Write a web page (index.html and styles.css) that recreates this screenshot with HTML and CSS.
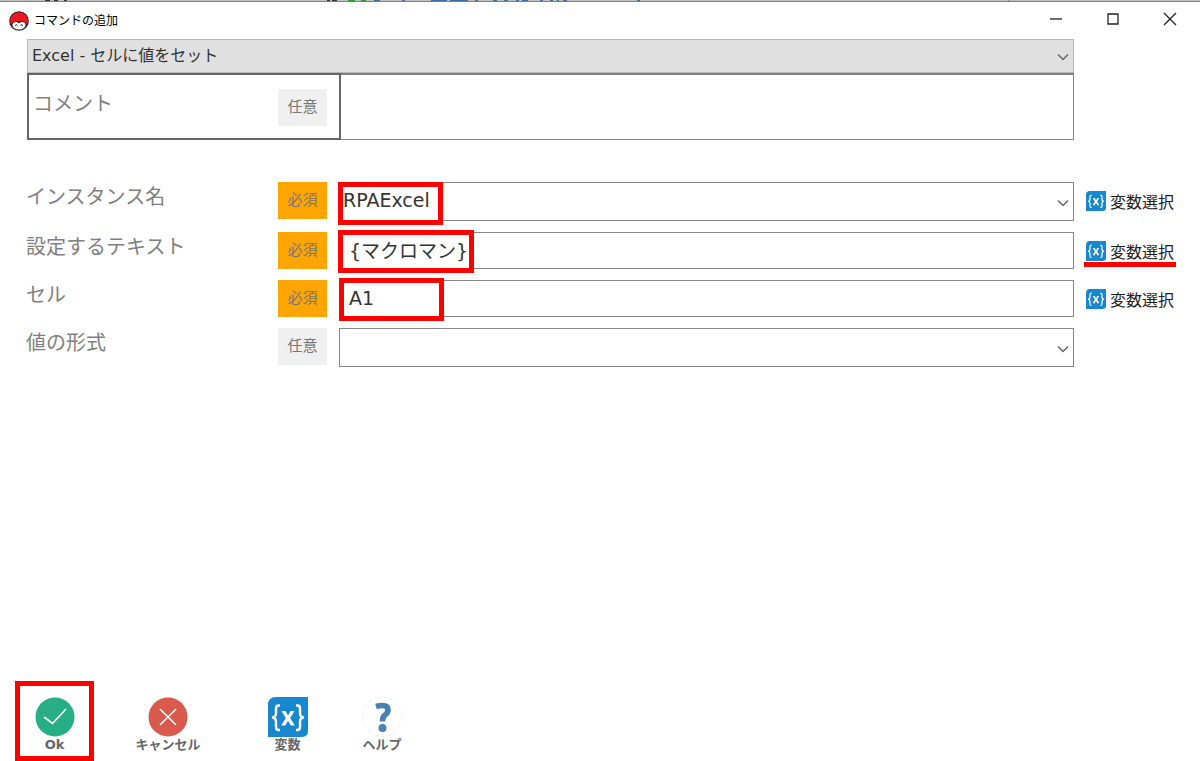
FILE: index.html
```html
<!DOCTYPE html>
<html lang="ja">
<head>
<meta charset="utf-8">
<title>コマンドの追加</title>
<link rel="stylesheet" href="styles.css">
</head>
<body>
<svg class="defs" aria-hidden="true">
  <symbol id="variable" viewBox="0 0 40 40">
    <path d="M8 0H40V34Q40 40 33 40H0V8Q0 0 8 0Z" fill="#1787cf"/>
    <g fill="none" stroke="#fff" stroke-width="2.4">
      <path d="M12 8.500H10.500Q8 8.500 8 11.500V16Q8 20.500 4 20.500Q8 20.500 8 25V30Q8 33 10.500 33H12"/>
      <path d="M28 8.500H29.500Q32 8.500 32 11.500V16Q32 20.500 36 20.500Q32 20.500 32 25V30Q32 33 29.500 33H28"/>
    </g>
    <path d="M13.500 14H17.500L20 18.500L22.500 14H26.500L22.200 21L26.800 28.500H22.700L20 23.700L17.300 28.500H13.200L17.800 21Z" fill="#fff"/>
  </symbol>
  <symbol id="chevron" viewBox="0 0 12 8">
    <path d="M1 1.500L6 6.500L11 1.500" fill="none" stroke="currentColor" stroke-width="1.500"/>
  </symbol>
</svg>
<div class="window">
  <div class="backdrop">
    <svg width="1200" height="2" aria-hidden="true">
      <path d="M45 1h5M54 1h4M64 1h3M327 1h3M332 1h5" stroke="#333" stroke-width="2"/>
      <path d="M348 1h7M361 1h5" stroke="#2a9d2a" stroke-width="2"/>
      <path d="M374 1h6M402 1h3M431 1h16M450 1h18M475 1h3M493 1h4M504 1h4M516 1h3M522 1h6M540 1h3M550 1h3M557 1h2M563 1h4M637 1h3" stroke="#3d6ba5" stroke-width="2"/>
      <path d="M1009 0v2" stroke="#777"/>
    </svg>
  </div>
  <header class="titlebar">
    <svg class="app-icon" viewBox="0 0 20 20" aria-hidden="true">
      <circle cx="10" cy="10" r="9.800" fill="#2a2020"/>
      <path d="M1.200 12Q.5 6 5 2.800Q10 -.2 15 2.800Q19.500 6 18.800 12L17 13Q15.500 9.500 10 10.500Q4.500 9.500 3 13Z" fill="#ea1a20"/>
      <path d="M3.300 14Q4 11 7 11Q9 11 10 12.500Q11 11 13 11Q16 11 16.700 14Q16 18.300 10 18.500Q4 18.300 3.300 14Z" fill="#fff"/>
      <path d="M6.300 14.800Q7.300 11.800 8.300 14.800M11.700 14.800Q12.700 11.800 13.700 14.800" fill="none" stroke="#222" stroke-width=".9"/>
    </svg>
    <h1 class="title">コマンドの追加</h1>
    <button class="control" aria-label="最小化"><svg viewBox="0 0 12 12"><path d="M0 6H12" /></svg></button>
    <button class="control" aria-label="最大化"><svg viewBox="0 0 12 12"><path d="M1 1H11V11H1Z"/></svg></button>
    <button class="control" aria-label="閉じる"><svg viewBox="0 0 12 12"><path d="M0 0L12 12M12 0L0 12"/></svg></button>
  </header>

  <main class="content">
    <section class="command">
      <div class="field">
        <select class="command-select" aria-label="コマンド"><option>Excel - セルに値をセット</option></select>
        <svg class="chevron"><use href="#chevron"/></svg>
      </div>
      <div class="comment">
        <div class="comment-head">
          <label class="label" for="comment">コメント</label>
          <span class="badge">任意</span>
        </div>
        <input class="comment-input" id="comment" type="text">
      </div>
    </section>

    <form class="form" id="settings">
      <div class="row">
        <label class="label" for="instance">インスタンス名</label>
        <span class="badge required">必須</span>
        <div class="field">
          <select class="input tall flush" id="instance"><option>RPAExcel</option></select>
          <svg class="chevron"><use href="#chevron"/></svg>
          <span class="mark mark-instance"></span>
        </div>
        <button class="pick" type="button"><svg class="pick-icon"><use href="#variable"/></svg>変数選択</button>
      </div>
      <div class="row">
        <label class="label" for="text">設定するテキスト</label>
        <span class="badge required">必須</span>
        <div class="field">
          <input class="input" id="text" type="text" value="{マクロマン}">
          <span class="mark mark-text"></span>
        </div>
        <button class="pick marked" type="button"><svg class="pick-icon"><use href="#variable"/></svg>変数選択</button>
      </div>
      <div class="row">
        <label class="label" for="cell">セル</label>
        <span class="badge required">必須</span>
        <div class="field">
          <input class="input" id="cell" type="text" value="A1">
          <span class="mark mark-cell"></span>
        </div>
        <button class="pick" type="button"><svg class="pick-icon"><use href="#variable"/></svg>変数選択</button>
      </div>
      <div class="row">
        <label class="label" for="format">値の形式</label>
        <span class="badge">任意</span>
        <div class="field">
          <select class="input tall" id="format"><option></option></select>
          <svg class="chevron"><use href="#chevron"/></svg>
        </div>
      </div>
    </form>
  </main>

  <footer class="actions">
    <button class="action selected">
      <svg class="action-icon" viewBox="0 0 40 40"><circle cx="20" cy="20" r="19.500" fill="#27ae85"/><path d="M9 20L17.500 26.500L31 12" fill="none" stroke="#fff" stroke-width="1.600"/></svg>
      Ok
    </button>
    <button class="action">
      <svg class="action-icon" viewBox="0 0 40 40"><circle cx="20" cy="20" r="19.500" fill="#d9594c"/><path d="M12 12L28 28M28 12L12 28" stroke="#fff" stroke-width="1.600"/></svg>
      キャンセル
    </button>
    <button class="action">
      <svg class="action-icon"><use href="#variable"/></svg>
      変数
    </button>
    <button class="action">
      <svg class="action-icon" viewBox="0 0 40 40"><circle cx="20" cy="20" r="19.500" fill="#fff" stroke="#eee" stroke-dasharray="4 3"/><path d="M14 9.500Q17.500 8.500 20.500 8.500Q26 8.500 26 13Q26 16 23 18Q20.500 20 20.500 24.500" fill="none" stroke="#4682b4" stroke-width="5.600"/><circle cx="20.500" cy="31" r="4" fill="#4682b4"/></svg>
      ヘルプ
    </button>
  </footer>
</div>
</body>
</html>
```

FILE: styles.css
```css
* {
  box-sizing: border-box;
}

body {
  margin: 0;
  background: #fff;
  color: #222;
  font-family: "DejaVu Sans", "Noto Sans CJK JP", sans-serif;
}

button {
  border: 0;
  padding: 0;
  background: none;
  color: inherit;
  font-family: inherit;
}

.defs {
  position: absolute;
  width: 0;
  height: 0;
}

.window {
  display: flex;
  flex-direction: column;
  min-height: 100vh;
}

.backdrop {
  height: 2px;
  background: #c0c0c0;
  border-bottom: 1px solid #808080;
  overflow: hidden;
}

.backdrop svg {
  display: block;
}

.titlebar {
  display: flex;
  align-items: center;
  height: 37px;
  padding: 0 2px 0 9px;
}

.app-icon {
  width: 20px;
  height: 20px;
}

.title {
  flex: 1;
  margin: 0 0 0 5px;
  font-size: 12px;
  font-weight: 400;
  line-height: 16px;
  color: #000;
}

.control {
  width: 57px;
  height: 37px;
}

.control svg {
  width: 12px;
  height: 12px;
  overflow: visible;
  fill: none;
  stroke: #222;
  stroke-width: 1.3;
}

.content {
  padding: 0 24px 0 26px;
}

.command {
  margin: 0 102px 42px 1px;
}

.field {
  position: relative;
  display: flex;
}

.command-select {
  appearance: none;
  width: 100%;
  height: 34px;
  padding: 0 4px 2px;
  border: 1px solid #b8b8b8;
  border-radius: 0;
  background: #e0e0e0;
  color: #333;
  font: inherit;
  font-size: 16px;
}

.chevron {
  position: absolute;
  right: 5px;
  top: calc(50% - 3px);
  width: 12px;
  height: 8px;
  color: #666;
  pointer-events: none;
}

.comment {
  display: flex;
  height: 67px;
}

.comment-head {
  display: grid;
  grid-template-columns: 1fr 49px;
  width: 314px;
  padding: 14px 12px 0 4px;
  border: 2px solid #666;
}

.comment-input {
  flex: 1;
  min-width: 0;
  padding: 0 8px;
  border: 1px solid #888;
  border-top: 2px solid #808080;
  border-left: 0;
  font: inherit;
  font-size: 19px;
}

.label {
  color: #808080;
  font-family: "Noto Sans CJK JP", sans-serif;
  font-size: 20px;
  line-height: 28px;
}

.badge {
  height: 37px;
  background: #f0f0f0;
  color: #777;
  font-size: 15px;
  line-height: 36px;
  text-align: center;
}

.badge.required {
  background: #ffa500;
}

.form {
  display: grid;
  gap: 11px;
}

.row {
  display: grid;
  grid-template-columns: 252px 49px 1fr 90px;
  align-items: start;
}

.row .field {
  margin: 0 12px;
}

.input {
  width: 100%;
  height: 37px;
  padding: 0 8px 2px 9px;
  border: 1px solid #888;
  border-radius: 0;
  background: #fff;
  color: #333;
  font: inherit;
  font-size: 19px;
}

.input.tall {
  appearance: none;
  height: 39px;
  padding-bottom: 4px;
}

.input.flush {
  padding-left: 3px;
}

.mark {
  position: absolute;
  left: -1px;
  top: -2px;
  width: 105px;
  height: 43px;
  border: 5px solid #f00;
  pointer-events: none;
}

.mark-instance {
  top: 0;
}

.mark-text {
  width: 136px;
}

.mark-cell {
  left: 0;
}

.pick {
  position: relative;
  display: flex;
  align-items: center;
  gap: 4px;
  height: 37px;
  font-size: 16px;
  white-space: nowrap;
}

.pick-icon {
  width: 20px;
  height: 20px;
}

.pick.marked::after {
  content: "";
  position: absolute;
  left: -2px;
  right: 0;
  bottom: 2px;
  height: 5px;
  background: #f00;
}

.actions {
  display: grid;
  grid-template-columns: 79px 148px 91px 98px;
  margin-top: auto;
  padding-left: 15px;
}

.action {
  display: flex;
  flex-direction: column;
  align-items: center;
  height: 80px;
  padding-top: 16px;
  color: #666;
  font-size: 13px;
  font-weight: 700;
  line-height: 16px;
  white-space: nowrap;
}

.action.selected {
  padding-top: 11px;
  border: 5px solid #f00;
}

.action-icon {
  width: 40px;
  height: 40px;
}
```
